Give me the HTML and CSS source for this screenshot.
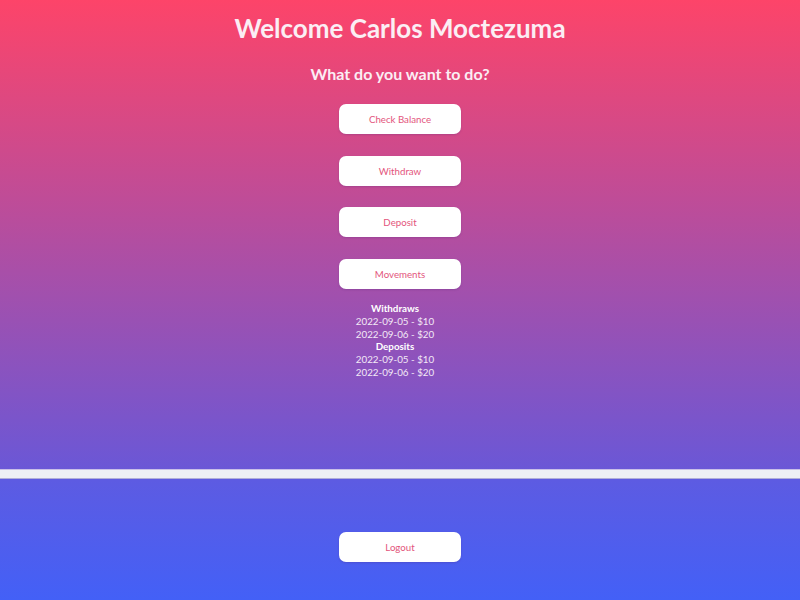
FILE: index.html
```html
<!DOCTYPE html>
<html>
<head>
<meta charset="utf-8">
<link rel="stylesheet" href="styles.css">
</head>
<body>
<main class="main">
  <h1 class="title">Welcome Carlos Moctezuma</h1>
  <h2 class="subtitle">What do you want to do?</h2>
  <div class="actions">
    <button class="btn">Check Balance</button>
    <button class="btn">Withdraw</button>
    <button class="btn">Deposit</button>
    <button class="btn">Movements</button>
  </div>
  <div class="movements">
    <div class="mv-head">Withdraws</div>
    <div>2022-09-05 - $10</div>
    <div>2022-09-06 - $20</div>
    <div class="mv-head">Deposits</div>
    <div>2022-09-05 - $10</div>
    <div>2022-09-06 - $20</div>
  </div>
</main>
<div class="divider"></div>
<footer class="footer">
  <button class="btn">Logout</button>
</footer>
</body>
</html>
```
FILE: styles.css
```css
html, body {
  margin: 0;
  padding: 0;
  height: 600px;
}
body {
  background: linear-gradient(to bottom, #fd4469 0%, #6b57d6 78%, #5d5be2 80%, #4360f7 100%);
  font-family: Lato, "Open Sans", sans-serif;
  color: #fbeef4;
  display: flex;
  flex-direction: column;
  overflow: hidden;
}
.main {
  height: 469px;
  display: flex;
  flex-direction: column;
  align-items: center;
  box-sizing: border-box;
  padding-top: 10px;
}
.title {
  margin: 0;
  font-size: 26px;
  font-weight: 700;
  line-height: 36px;
}
.subtitle {
  margin: 18px 0 0;
  font-size: 16px;
  font-weight: 700;
  line-height: 20px;
}
.actions {
  margin-top: 20px;
  display: flex;
  flex-direction: column;
  gap: 21.5px;
}
.btn {
  width: 122px;
  height: 30px;
  border: none;
  border-radius: 7px;
  background: #ffffff;
  color: #e3557c;
  font-family: Lato, "Open Sans", sans-serif;
  font-size: 9.7px;
  box-shadow: 0 1px 2px rgba(80, 40, 120, 0.25);
  padding: 0;
}
.movements {
  margin-top: 13.5px;
  margin-right: 10px;
  display: flex;
  flex-direction: column;
  align-items: center;
  font-size: 9.8px;
  line-height: 12.8px;
  color: #f3e9f6;
}
.mv-head {
  font-weight: 700;
  color: #ffffff;
}
.divider {
  height: 10px;
  background: #eef0f5;
  border-top: 1px solid #c9bfe8;
  border-bottom: 1px solid #b0aed8;
  box-sizing: border-box;
}
.footer {
  flex: 1;
  display: flex;
  justify-content: center;
  padding-top: 53px;
}
```
